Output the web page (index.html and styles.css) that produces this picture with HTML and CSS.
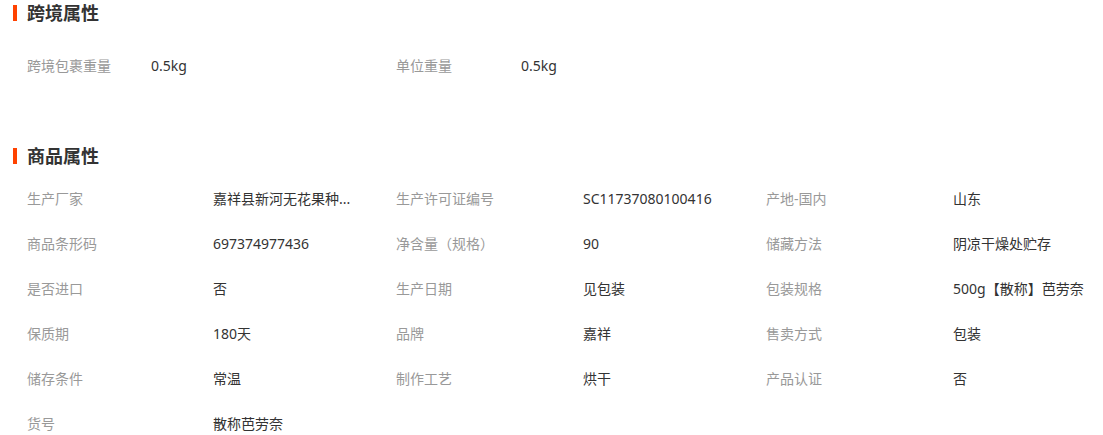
FILE: index.html
```html
<!DOCTYPE html>
<html lang="zh-CN">
<head>
<meta charset="utf-8">
<title>属性</title>
<link rel="stylesheet" href="styles.css">
</head>
<body>
<section class="attr-section">
  <h3 class="attr-title">跨境属性</h3>
  <ul class="attr-list cross">
    <li class="attr-item"><span class="attr-label">跨境包裹重量</span><span class="attr-value">0.5kg</span></li>
    <li class="attr-item"><span class="attr-label">单位重量</span><span class="attr-value">0.5kg</span></li>
  </ul>
</section>
<section class="attr-section product">
  <h3 class="attr-title">商品属性</h3>
  <ul class="attr-list">
    <li class="attr-item"><span class="attr-label">生产厂家</span><span class="attr-value" title="嘉祥县新河无花果种植专业合作社">嘉祥县新河无花果种...</span></li>
    <li class="attr-item"><span class="attr-label">生产许可证编号</span><span class="attr-value">SC11737080100416</span></li>
    <li class="attr-item"><span class="attr-label">产地-国内</span><span class="attr-value">山东</span></li>
    <li class="attr-item"><span class="attr-label">商品条形码</span><span class="attr-value">697374977436</span></li>
    <li class="attr-item"><span class="attr-label">净含量（规格）</span><span class="attr-value">90</span></li>
    <li class="attr-item"><span class="attr-label">储藏方法</span><span class="attr-value">阴凉干燥处贮存</span></li>
    <li class="attr-item"><span class="attr-label">是否进口</span><span class="attr-value">否</span></li>
    <li class="attr-item"><span class="attr-label">生产日期</span><span class="attr-value">见包装</span></li>
    <li class="attr-item"><span class="attr-label">包装规格</span><span class="attr-value">500g【散称】芭劳奈</span></li>
    <li class="attr-item"><span class="attr-label">保质期</span><span class="attr-value">180天</span></li>
    <li class="attr-item"><span class="attr-label">品牌</span><span class="attr-value">嘉祥</span></li>
    <li class="attr-item"><span class="attr-label">售卖方式</span><span class="attr-value">包装</span></li>
    <li class="attr-item"><span class="attr-label">储存条件</span><span class="attr-value">常温</span></li>
    <li class="attr-item"><span class="attr-label">制作工艺</span><span class="attr-value">烘干</span></li>
    <li class="attr-item"><span class="attr-label">产品认证</span><span class="attr-value">否</span></li>
    <li class="attr-item"><span class="attr-label">货号</span><span class="attr-value">散称芭劳奈</span></li>
  </ul>
</section>
</body>
</html>
```
FILE: styles.css
```css
* { box-sizing: border-box; }
html, body {
  margin: 0;
  padding: 0;
  background: #fff;
}
body {
  font-family: "Noto Sans", "Noto Sans CJK SC", sans-serif;
  font-size: 14px;
  color: #333;
}
.attr-section { margin: 0; }
.attr-section.product { margin-top: 55px; }
.attr-title {
  position: relative;
  margin: 0;
  padding-left: 27px;
  height: 26px;
  line-height: 26px;
  font-size: 18px;
  font-weight: bold;
  color: #333;
}
.attr-title::before {
  content: "";
  position: absolute;
  left: 13px;
  top: 5px;
  width: 4px;
  height: 16px;
  background: #ff4200;
}
.attr-list {
  list-style: none;
  margin: 7px 0 0;
  padding: 0 0 0 27px;
  display: grid;
  grid-template-columns: 369px 370px 337px;
}
.attr-list.cross { margin-top: 17px; }
.attr-item {
  display: flex;
  height: 45px;
  line-height: 45px;
  white-space: nowrap;
}
.attr-label {
  flex: 0 0 187px;
  color: #999;
}
.attr-item:nth-child(3n+1) .attr-label { flex-basis: 186px; }
.cross .attr-item .attr-label { flex-basis: 124px; }
.cross .attr-item:nth-child(2) .attr-label { flex-basis: 125px; }
.attr-value {
  color: #333;
}
```
